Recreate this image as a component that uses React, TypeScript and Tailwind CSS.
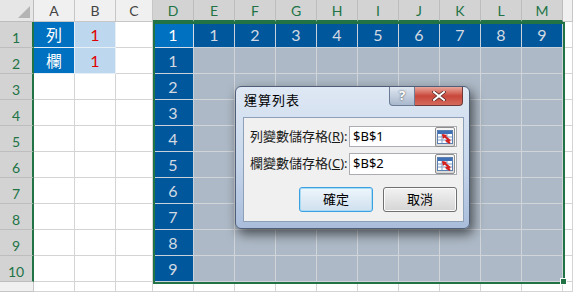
import React from "react";

const COLS = ["A", "B", "C", "D", "E", "F", "G", "H", "I", "J", "K", "L", "M", ""];
const CELL_FONT = { fontFamily: "Lato, 'Noto Sans CJK TC', sans-serif" };
const UI_FONT = { fontFamily: "'Noto Sans', 'Noto Sans CJK TC', sans-serif" };

type Cell = { text?: string; kind: "plain" | "head" | "light" | "active" | "dark" | "sel" };

function cellAt(r: number, c: number): Cell {
  // r: 1..11, c: 0..13 (A..N)
  if (r <= 10 && c >= 3 && c <= 12) {
    if (r === 1 && c === 3) return { text: "1", kind: "active" };
    if (r === 1) return { text: String(c - 3), kind: "dark" };
    if (c === 3) return { text: String(r - 1), kind: "dark" };
    return { kind: "sel" };
  }
  if (c === 0 && r === 1) return { text: "列", kind: "head" };
  if (c === 0 && r === 2) return { text: "欄", kind: "head" };
  if (c === 1 && r <= 2) return { text: "1", kind: "light" };
  return { kind: "plain" };
}

const kindClass: Record<Cell["kind"], string> = {
  plain: "bg-white border-[#d4d4d4]",
  head: "bg-[#0070c0] text-white border-[#e6eef6]",
  light: "bg-[#bdd7ee] text-[#e00000] border-[#e6eef6]",
  active: "bg-[#0070c0] text-white border-[#d6dde6]",
  dark: "bg-[#01579b] text-[#d3dae3] border-[#c9d1db]",
  sel: "bg-[#adb9c6] border-[#d1d5da]",
};

function RangeIcon() {
  return (
    <div className="w-[20px] h-[20px] rounded-[2px] border border-[#8d8d8d] bg-gradient-to-b from-[#f6f6f6] to-[#d8d8d8] flex items-center justify-center">
      <svg width="16" height="14" viewBox="0 0 16 14">
        <rect x="0.5" y="0.5" width="15" height="13" fill="#ffffff" stroke="#5b7fb0" />
        <rect x="1" y="1" width="14" height="3" fill="#3f6fb5" />
        <path d="M1 7H15M1 10H15M5 4V13M10 4V13" stroke="#7f9cc6" strokeWidth="1" />
        <path d="M6 5L12 10L10 11L13 13" stroke="#d62020" strokeWidth="2.2" fill="none" />
        <path d="M5 4L10 5L6 9Z" fill="#d62020" />
      </svg>
    </div>
  );
}

function Dialog() {
  return (
    <div
      className="absolute left-[235px] top-[86px] w-[235px] h-[143px] rounded-[6px] border border-[#4f5f78] bg-gradient-to-b from-[#dfe8f4] via-[#c9d8ec] to-[#a9bddb] shadow-[3px_5px_12px_rgba(0,0,0,0.6)] flex flex-col"
      style={UI_FONT}
    >
      <div className="h-[30px] flex justify-between items-start pl-[8px] pr-[6px]">
        <span className="mt-[4px] text-[13px] text-black tracking-[1px]">運算列表</span>
        <div className="flex">
          <div className="w-[26px] h-[19px] rounded-bl-[4px] border border-t-0 border-[#6c7c96] bg-gradient-to-b from-[#dfe7f1] to-[#a9b8cd] flex items-center justify-center text-[13px] font-bold text-white [text-shadow:0_0_2px_#333]">
            ?
          </div>
          <div className="w-[48px] h-[19px] rounded-br-[4px] border border-t-0 border-l-0 border-[#6c3a3a] bg-gradient-to-b from-[#e8a59b] via-[#c8463a] to-[#d46a5c] flex items-center justify-center">
            <svg width="14" height="10" viewBox="0 0 14 10">
              <path d="M2 1L12 9M12 1L2 9" stroke="#4a2020" strokeWidth="3.4" strokeLinecap="square" />
              <path d="M2 1L12 9M12 1L2 9" stroke="#ffffff" strokeWidth="2" strokeLinecap="square" />
            </svg>
          </div>
        </div>
      </div>
      <div className="mb-[6px] ml-[7px] mr-[5px] flex-1 bg-[#f0f0f0] border border-[#8e9fb8] flex flex-col px-[6px] pt-[8px]">
        <div className="flex items-center justify-between">
          <span className="text-[13px] text-[#1a1a1a]">
            列變數儲存格(<u>R</u>):
          </span>
          <div className="w-[108px] h-[21px] bg-white border border-[#abadb3] flex items-center justify-between pl-[3px] pr-[1px]">
            <span className="text-[13px] text-black">$B$1</span>
            <RangeIcon />
          </div>
        </div>
        <div className="flex items-center justify-between mt-[6px]">
          <span className="text-[13px] text-[#1a1a1a]">
            欄變數儲存格(<u>C</u>):
          </span>
          <div className="w-[108px] h-[22px] bg-white border border-[#abadb3] flex items-center justify-between pl-[3px] pr-[1px]">
            <span className="text-[13px] text-black">$B$2</span>
            <RangeIcon />
          </div>
        </div>
        <div className="flex justify-end gap-[10px] mt-[12px]">
          <div className="w-[74px] h-[25px] rounded-[3px] border border-[#3c9fe0] bg-gradient-to-b from-[#eef6fc] to-[#cfe0ee] shadow-[inset_0_0_0_1px_#a7dcf7] flex items-center justify-center text-[13px] text-black">
            確定
          </div>
          <div className="w-[74px] h-[25px] rounded-[3px] border border-[#707070] bg-gradient-to-b from-[#f2f2f2] to-[#d5d5d5] shadow-[inset_0_0_0_1px_#fcfcfc] flex items-center justify-center text-[13px] text-black">
            取消
          </div>
        </div>
      </div>
    </div>
  );
}

export default function App() {
  const rows = Array.from({ length: 11 }, (_, i) => i + 1);
  return (
    <div className="relative w-[573px] h-[292px] overflow-hidden bg-white" style={CELL_FONT}>
      <div className="grid grid-cols-[34px_41px_41px_37px_repeat(10,41px)_10px] grid-rows-[22px_repeat(10,26px)_10px]">
        {/* header row */}
        <div className="bg-[#e6e6e6] border-r border-b border-[#bdbdbd] flex items-end justify-end p-[3px]">
          <svg width="12" height="12" viewBox="0 0 12 12">
            <path d="M12 0V12H0Z" fill="#b4b4b4" />
          </svg>
        </div>
        {COLS.map((c, i) => {
          const hi = i >= 3 && i <= 12;
          return (
            <div
              key={"h" + i}
              className={
                "border-r border-b flex items-center justify-center text-[14px] " +
                (hi
                  ? "bg-[#d3d3d3] text-[#217346] border-r-[#bdbdbd] border-b-[#217346] border-b-2"
                  : "bg-[#f0f0f0] text-[#444444] border-[#c6c6c6]")
              }
            >
              {c}
            </div>
          );
        })}
        {rows.map((r) => (
          <React.Fragment key={r}>
            <div
              className={
                "border-b flex items-center justify-center pt-[5px] text-[14px] " +
                (r <= 10
                  ? "bg-[#d3d3d3] text-[#217346] border-b-[#bdbdbd] border-r-2 border-r-[#217346]"
                  : "bg-[#f0f0f0] text-[#444444] border-r border-[#c6c6c6]")
              }
            >
              {r <= 10 ? r : ""}
            </div>
            {COLS.map((_, c) => {
              const cell = cellAt(r, c);
              return (
                <div
                  key={c}
                  className={
                    "border-r border-b flex items-center justify-center text-[16px] " +
                    kindClass[cell.kind]
                  }
                >
                  {cell.text}
                </div>
              );
            })}
          </React.Fragment>
        ))}
      </div>
      {/* selection frame */}
      <div className="absolute left-[153px] top-[22px] w-[412px] h-[262px] border-2 border-[#217346] pointer-events-none" />
      <div className="absolute left-[560px] top-[278px] w-[7px] h-[7px] bg-[#217346] border border-white" />
      <Dialog />
    </div>
  );
}
